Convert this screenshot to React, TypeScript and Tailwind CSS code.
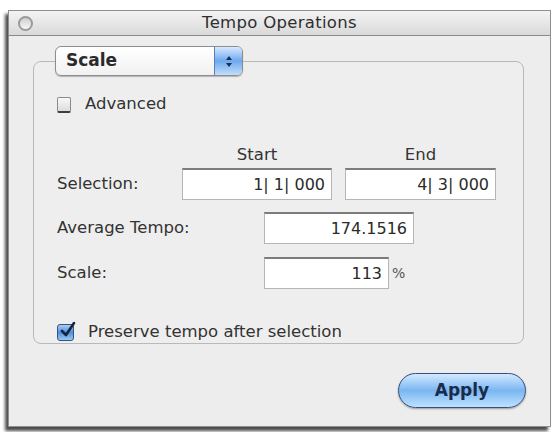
import React from 'react'

const font = { fontFamily: '"DejaVu Sans", "Liberation Sans", sans-serif' }

function Field({ value, width }: { value: string; width: string }) {
  return (
    <div
      className={`${width} h-[32px] bg-white border border-[#b5b5b5] border-t-[#7c7c7c] border-t-2 flex items-center justify-end pr-[6px] text-[16px] text-[#2a2a2a]`}
    >
      {value}
    </div>
  )
}

export default function App() {
  return (
    <div className="w-[553px] h-[432px] bg-white overflow-hidden pt-[10px] pl-[8px]" style={font}>
      {/* Window */}
      <div className="w-[543px] h-[417px] border border-[#8f8f8f] flex flex-col shadow-[-3px_4px_3px_rgba(0,0,0,0.7)]">
        {/* Title bar */}
        <div className="h-[25px] shrink-0 flex items-center px-[9px] border-b border-[#8a8a8a] bg-gradient-to-b from-[#f4f4f4] to-[#d9d9d9]">
          <div className="w-[15px] h-[15px] rounded-full border-2 border-[#9a9a9a] bg-gradient-to-b from-[#d0d0d0] to-[#f6f6f6]" />
          <div className="flex-1 text-center text-[16.5px] font-medium tracking-[0.3px] text-[#2e2e2e]">Tempo Operations</div>
          <div className="w-[15px]" />
        </div>

        {/* Body */}
        <div className="flex-1 bg-[#ededed] pt-[10px] pl-[24px] pr-[26px]">
          <fieldset className="h-[298px] border border-[#b9b9b9] rounded-[8px] bg-[#eeeeee]">
            <legend className="ml-[21px]">
              <div className="w-[188px] h-[30px] flex rounded-[6px] border border-[#8d8d8d] bg-gradient-to-b from-white to-[#f1f1f1] shadow-[0_1px_1px_rgba(0,0,0,0.25)]">
                <div className="flex-1 flex items-center pl-[10px] text-[17px] font-bold text-[#2a2a2a]">Scale</div>
                <div className="w-[28px] rounded-r-[5px] border-l border-[#5b7fb5] bg-gradient-to-b from-[#d8e9fd] via-[#6ea8ee] to-[#c3defa] flex flex-col items-center justify-center gap-[3px]">
                  <div className="w-0 h-0 border-l-[3px] border-r-[3px] border-b-[4px] border-l-transparent border-r-transparent border-b-[#1d2d4d]" />
                  <div className="w-0 h-0 border-l-[3px] border-r-[3px] border-t-[4px] border-l-transparent border-r-transparent border-t-[#1d2d4d]" />
                </div>
              </div>
            </legend>

            <div className="pl-[23px] text-[16.5px] text-[#333]">
              {/* Advanced */}
              <div className="mt-[20px] h-[17px] flex items-center">
                <div className="w-[14px] h-[16px] rounded-[2px] border border-[#8a8a8a] border-b-2 border-b-[#3c3c3c] bg-gradient-to-b from-[#f8f8f8] to-[#dcdcdc]" />
                <span className="ml-[14px]">Advanced</span>
              </div>

              {/* Column headers */}
              <div className="mt-[33px] h-[18px] flex items-center">
                <div className="w-[125px]" />
                <div className="w-[150px] text-center">Start</div>
                <div className="w-[13px]" />
                <div className="w-[151px] text-center">End</div>
              </div>

              {/* Selection */}
              <div className="mt-[4px] flex items-center">
                <div className="w-[125px]">Selection:</div>
                <Field value="1| 1| 000" width="w-[150px]" />
                <div className="w-[13px]" />
                <Field value="4| 3| 000" width="w-[151px]" />
              </div>

              {/* Average tempo */}
              <div className="mt-[12px] flex items-center">
                <div className="w-[207px]">Average Tempo:</div>
                <Field value="174.1516" width="w-[150px]" />
              </div>

              {/* Scale */}
              <div className="mt-[13px] flex items-center">
                <div className="w-[207px]">Scale:</div>
                <Field value="113" width="w-[125px]" />
                <span className="ml-[3px] text-[14px] text-[#555]">%</span>
              </div>

              {/* Preserve */}
              <div className="mt-[33px] h-[20px] flex items-center">
                <div className="relative w-[17px] h-[17px] rounded-[3px] border border-[#34547f] bg-gradient-to-b from-[#a9cdf3] via-[#4f8fd8] to-[#9cc8f3]">
                  <svg className="absolute -top-[4px] left-[1px]" width="17" height="18" viewBox="0 0 17 18">
                    <path d="M3 10 L7 14 L15 2" fill="none" stroke="#14233f" strokeWidth="2.6" strokeLinecap="round" strokeLinejoin="round" />
                  </svg>
                </div>
                <span className="ml-[14px]">Preserve tempo after selection</span>
              </div>
            </div>
          </fieldset>

          {/* Apply */}
          <div className="mt-[29px] flex justify-end -mr-[2px]">
            <button className="w-[128px] h-[35px] rounded-full border border-[#34507f] bg-gradient-to-b from-[#d3e9ff] via-[#7ab6f1] to-[#bde2ff] text-[17px] font-bold text-[#1a2b4c] shadow-[0_1px_2px_rgba(0,0,0,0.35)]">
              Apply
            </button>
          </div>
        </div>
      </div>
    </div>
  )
}
